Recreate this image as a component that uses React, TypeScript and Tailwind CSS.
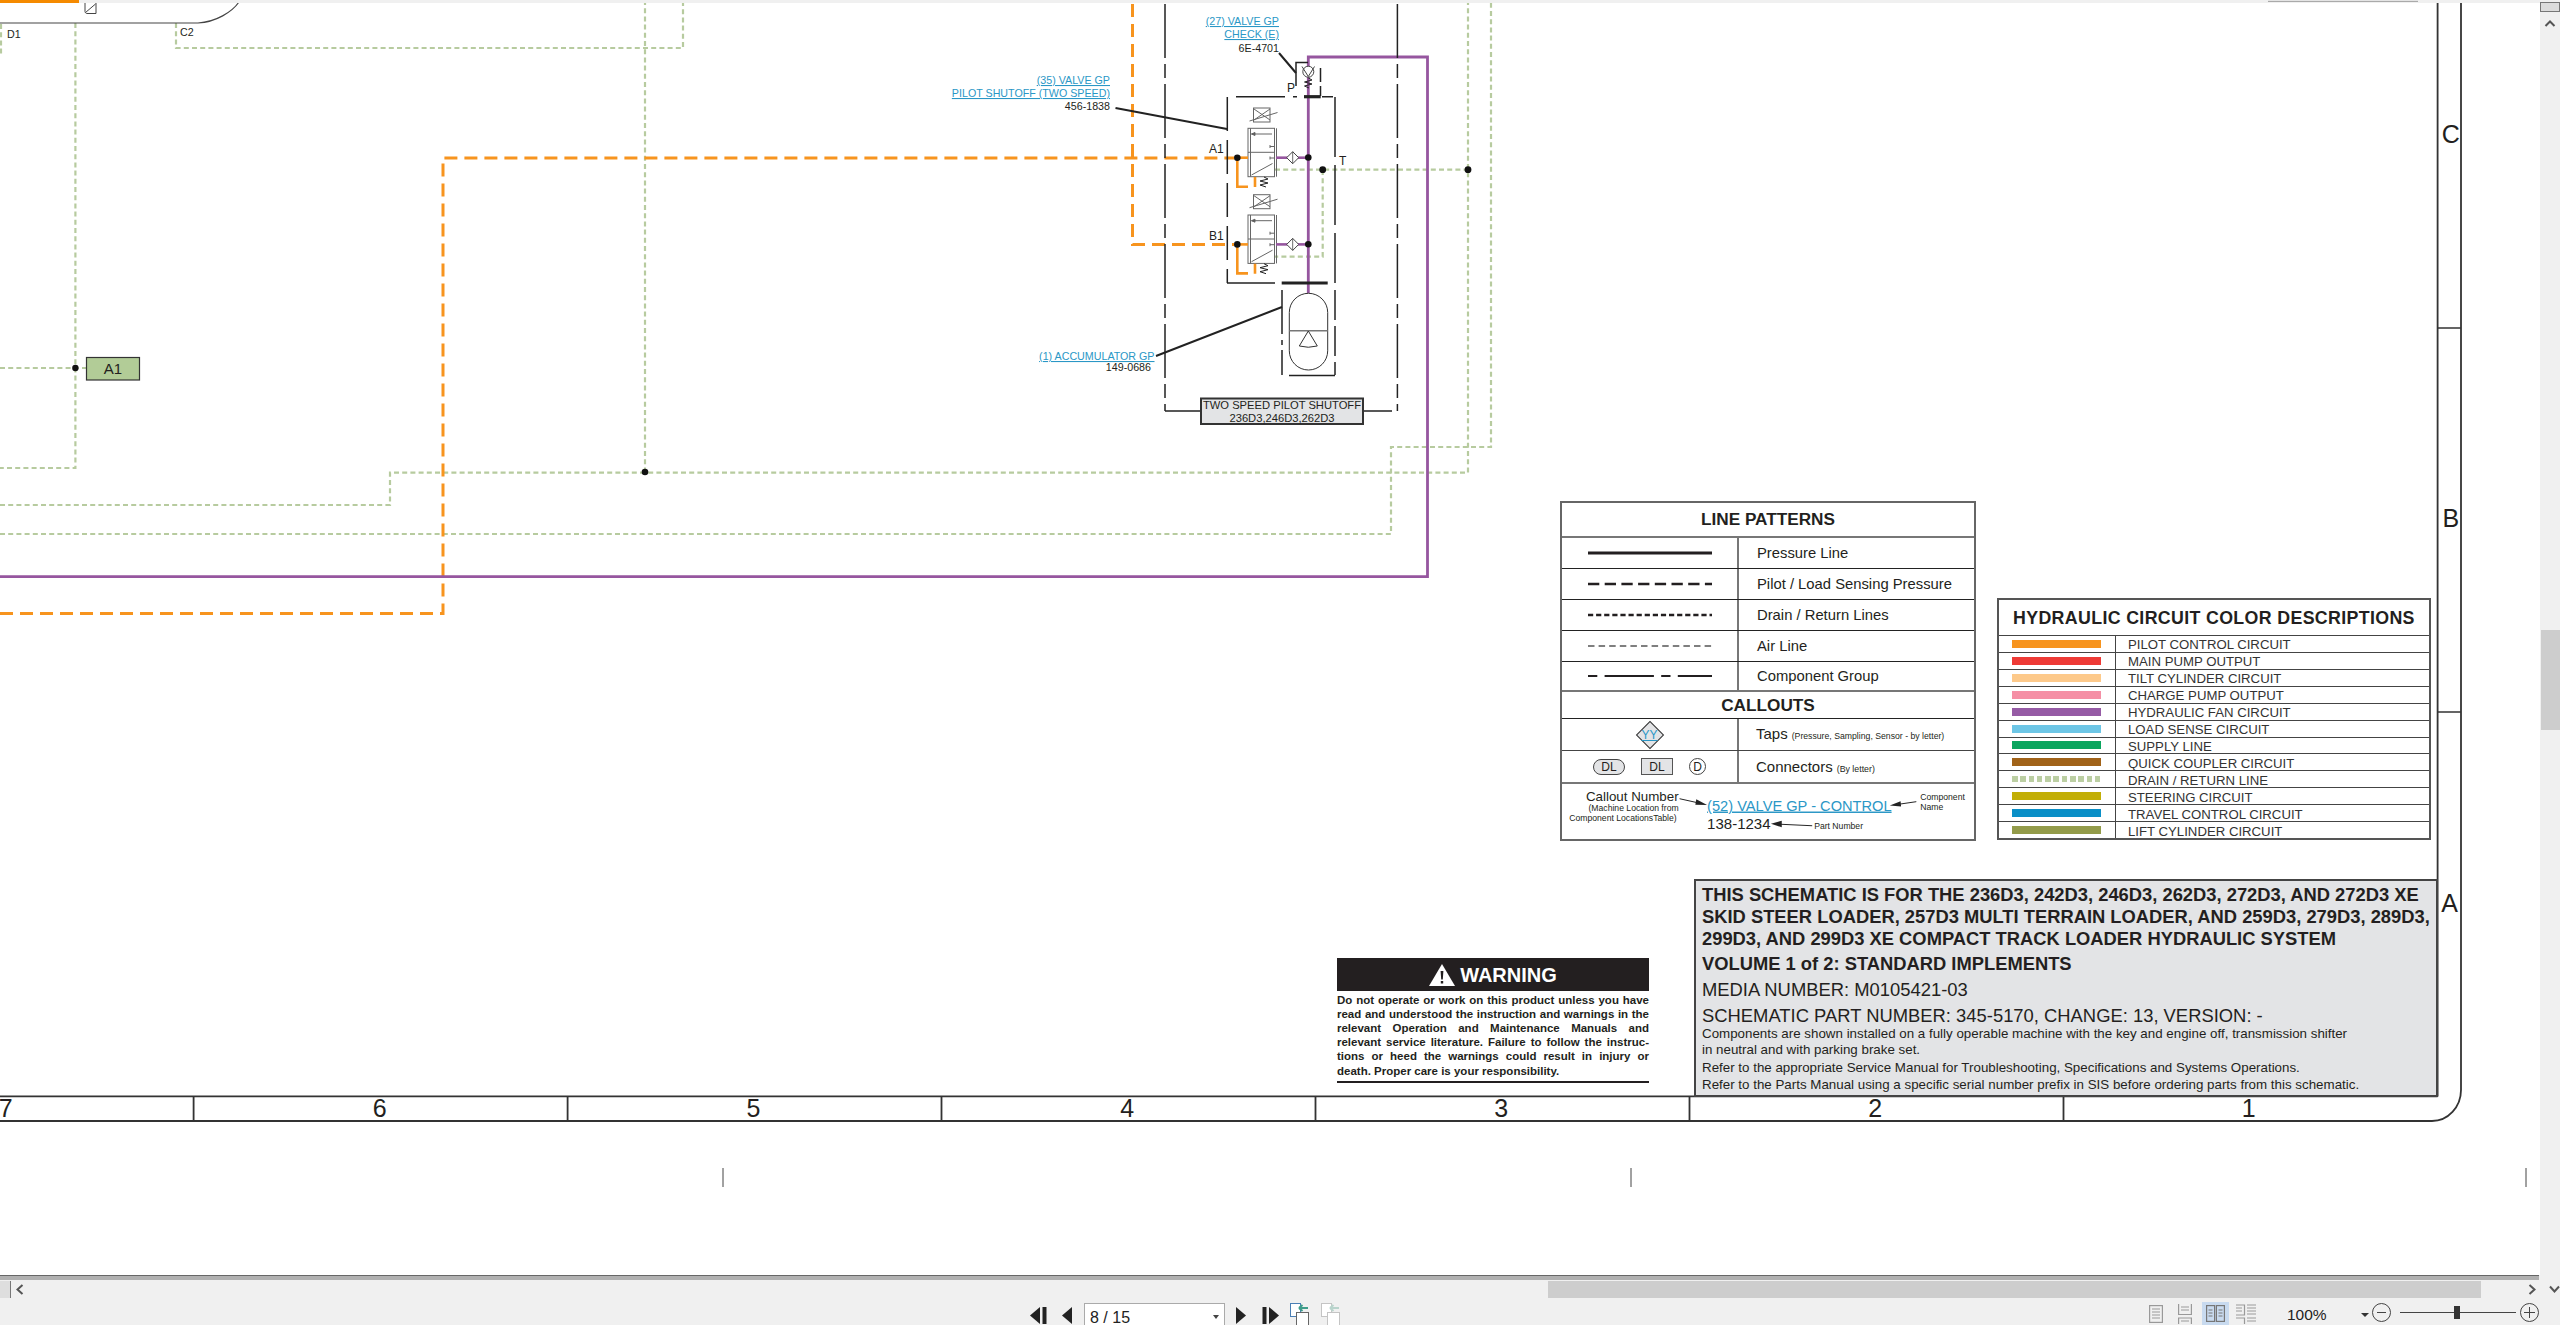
const GREEN = "#b7cb9f";
const ORANGE = "#f7941e";
const PURPLE = "#96569f";
const INK = "#231f20";
const LINK = "#2a97c6";

const lineSamples = [
  { label: "Pressure Line", width: 3, dash: "", color: INK },
  { label: "Pilot / Load Sensing Pressure", width: 2.6, dash: "11.3 5.4", color: INK },
  { label: "Drain / Return Lines", width: 2.6, dash: "5.2 2.9", color: INK },
  { label: "Air Line", width: 1.3, dash: "6.5 4.1", color: "#555" },
  { label: "Component Group", width: 2, dash: "9.3 7.3 49.3 7.3 9.3 7.3 34 0", color: INK },
];

const circuits = [
  { label: "PILOT CONTROL CIRCUIT", color: "bg-[#f7941e]" },
  { label: "MAIN PUMP OUTPUT", color: "bg-[#ee3a36]" },
  { label: "TILT CYLINDER CIRCUIT", color: "bg-[#fdc98a]" },
  { label: "CHARGE PUMP OUTPUT", color: "bg-[#f58fa5]" },
  { label: "HYDRAULIC FAN CIRCUIT", color: "bg-[#965ba5]" },
  { label: "LOAD SENSE CIRCUIT", color: "bg-[#6dc6e6]" },
  { label: "SUPPLY LINE", color: "bg-[#0ba55f]" },
  { label: "QUICK COUPLER CIRCUIT", color: "bg-[#a16319]" },
  { label: "DRAIN / RETURN LINE", color: "" },
  { label: "STEERING CIRCUIT", color: "bg-[#c2ae06]" },
  { label: "TRAVEL CONTROL CIRCUIT", color: "bg-[#0a8fc7]" },
  { label: "LIFT CYLINDER CIRCUIT", color: "bg-[#939b4a]" },
];

const warningLines = [
  "Do not operate or work on this product unless you have",
  "read and understood the instruction and warnings in the",
  "relevant Operation and Maintenance Manuals and",
  "relevant service literature. Failure to follow the instruc-",
  "tions or heed the warnings could result in injury or",
];

function Valve({ dy }: { dy: number }) {
  return (
    <g transform={`translate(0 ${dy})`} stroke="#666" fill="none" strokeWidth="1">
      <rect x="1253.5" y="108" width="16.5" height="14" />
      <path d="M1254 109L1270 120M1254 120L1270 109M1249.5 121L1277.5 112.5" />
      <rect x="1248" y="128.3" width="26.5" height="48.4" />
      <path d="M1250.5 128.3V176.7M1276.5 128.3V176.7M1248 152.3H1274.5M1251.5 134H1272M1251.5 175L1272.5 163.5" />
      <path d="M1255 132.5L1251.5 134L1255 135.5Z" fill="#555" />
      <path d="M1270 146.5H1274.5M1270 145V148M1270 158H1274.5M1270 156.5V159.5" />
      <path d="M1264 177L1268 179L1260 181L1268 183L1260 185L1266 187" stroke="#222" />
      <path d="M1237.3 158V186.7H1248M1255 177V187" stroke={ORANGE} strokeWidth="2.6" />
      <path d="M1237.3 157.7H1248" stroke={ORANGE} strokeWidth="2.6" />
      <path d="M1276 157.7H1308" stroke={PURPLE} strokeWidth="2.6" />
      <path d="M1292.7 151.7L1298.7 157.7L1292.7 163.7L1286.7 157.7Z" fill="#fff" stroke="#444" />
      <path d="M1292.7 151.7V163.7" stroke="#444" strokeWidth="0.8" />
      <circle cx="1237.3" cy="157.7" r="3.3" fill="#111" stroke="none" />
      <circle cx="1308.3" cy="157.5" r="3.3" fill="#111" stroke="none" />
    </g>
  );
}

function Diagram() {
  return (
    <svg className="absolute left-0 top-0" width="2540" height="1275" viewBox="0 0 2540 1275" fill={INK} fontSize="10.7">
      {/* return lines */}
      <g fill="none" stroke={GREEN} strokeWidth="2.2" strokeDasharray="5 3.2">
        <path d="M1 24V55" />
        <path d="M75.4 23V468H0" />
        <path d="M176 23V48H683V0" />
        <path d="M645 0V472" />
        <path d="M0 368H86" />
        <path d="M0 505H390V472.6H1468V0" />
        <path d="M0 534H1391V447H1491V0" />
        <path d="M1275 169.7H1468" />
        <path d="M1322.7 170V256.7H1275" />
      </g>
      {/* pilot lines */}
      <g fill="none" stroke={ORANGE} strokeWidth="3" strokeDasharray="13 7">
        <path d="M0 613.6H443V158H1234" />
        <path d="M1132.5 4V244.5H1234" />
      </g>
      {/* fan line */}
      <path d="M0 576.7H1427.5V57H1308.3V293" fill="none" stroke={PURPLE} strokeWidth="2.8" />

      <circle cx="75.4" cy="368" r="3.2" fill="#111" />
      <circle cx="645" cy="472" r="3.3" fill="#111" />
      <circle cx="1468" cy="169.7" r="3.4" fill="#111" />
      <circle cx="1322.7" cy="169.7" r="3.4" fill="#111" />

      <rect x="86.5" y="357.5" width="53" height="22.5" fill="#b2cc97" stroke="#333" strokeWidth="1.2" />
      <text x="113" y="374" textAnchor="middle" fontSize="15">A1</text>
      <text x="7" y="38">D1</text>
      <text x="180" y="36">C2</text>

      {/* top left block */}
      <path d="M0 23H198C216 22 232 12 239 2" fill="none" stroke="#444" strokeWidth="1.2" />
      <path d="M85 3V11.5C85 12.5 86 13.5 87 13.5H96V3M85.5 12.5L95.5 4" fill="none" stroke="#444" strokeWidth="1" />

      {/* two speed group */}
      <g fill="none" stroke="#222" strokeWidth="1.5">
        <path d="M1165 4V411M1397.4 4V411" strokeDasharray="54 6 14 6" />
        <path d="M1165 411H1200M1363 411H1392" />
        <path d="M1227.3 97V283" strokeDasharray="34 9" />
        <path d="M1335 97V283" strokeDasharray="60 8" />
        <path d="M1236 96.7H1285M1293 96.7H1297M1322 96.7H1333" />
        <path d="M1227 283H1275" />
        <path d="M1281.7 283H1327.7" strokeWidth="3.2" />
        <path d="M1304 96.7H1320.7" strokeWidth="3.2" />
        <path d="M1296 86V62.5H1308M1320.5 68V82M1320.5 86V96" />
        <path d="M1282 290V345M1282 350V375" strokeDasharray="44 6" />
        <path d="M1335 290V375" strokeDasharray="30 6" />
        <path d="M1289 375.5H1335" />
        <path d="M1279 53L1296 73M1115.5 108L1227 129M1156 356L1282 307" strokeWidth="2" />
      </g>

      <Valve dy={0} />
      <Valve dy={86.7} />

      {/* check valve */}
      <g fill="none" stroke="#444" strokeWidth="1">
        <circle cx="1308.3" cy="71.7" r="5.5" fill="#fff" />
        <path d="M1302 66.5L1308.3 76.5L1314.5 66.5" />
        <path d="M1308.3 78L1312 80L1304.5 82L1312 84L1304.5 86L1309 88" stroke="#222" />
      </g>

      {/* accumulator */}
      <g fill="none" stroke="#333" strokeWidth="1">
        <rect x="1289.3" y="293.3" width="38.4" height="76.7" rx="19.2" fill="#fff" />
        <path d="M1289.3 330.7H1327.7" stroke="#777" strokeWidth="1.4" />
        <path d="M1308.3 331L1299.3 346Q1308.3 348.5 1317.3 346Z" />
      </g>

      {/* callouts */}
      <g textAnchor="end">
        <text x="1279" y="25" fill={LINK} textDecoration="underline">(27) VALVE GP</text>
        <text x="1279" y="38" fill={LINK} textDecoration="underline">CHECK (E)</text>
        <text x="1279" y="52">6E-4701</text>
        <text x="1110" y="84" fill={LINK} textDecoration="underline">(35) VALVE GP</text>
        <text x="1110" y="97" fill={LINK} textDecoration="underline">PILOT SHUTOFF (TWO SPEED)</text>
        <text x="1110" y="110">456-1838</text>
        <text x="1154.5" y="360" fill={LINK} textDecoration="underline">(1) ACCUMULATOR GP</text>
        <text x="1151" y="371">149-0686</text>
      </g>
      <text x="1209" y="153" fontSize="12">A1</text>
      <text x="1209" y="240" fontSize="12">B1</text>
      <text x="1339" y="165" fontSize="12">T</text>
      <text x="1287" y="92" fontSize="12">P</text>

      <rect x="1201" y="398.5" width="162" height="25.5" fill="#e3e4e6" stroke="#333" strokeWidth="2" />
      <text x="1282" y="409" textAnchor="middle" fontSize="11.2">TWO SPEED PILOT SHUTOFF</text>
      <text x="1282" y="422" textAnchor="middle" fontSize="11.2">236D3,246D3,262D3</text>

      {/* sheet frame */}
      <g fill="none" stroke="#333" strokeWidth="1.8">
        <path d="M2437.6 3V1096.4M0 1096.4H2437.6" />
        <path d="M2461 3V1090C2461 1107 2448 1121 2432 1121H0" />
        <path d="M193.6 1096V1121M567.6 1096V1121M941.5 1096V1121M1315.5 1096V1121M1689.5 1096V1121M2063.5 1096V1121" />
        <path d="M2437.6 328H2461M2437.6 712H2461" strokeWidth="1.3" />
      </g>
      <g textAnchor="middle" fontSize="25">
        <text x="5.7" y="1117">7</text>
        <text x="379.6" y="1117">6</text>
        <text x="753.5" y="1117">5</text>
        <text x="1127.3" y="1117">4</text>
        <text x="1501.3" y="1117">3</text>
        <text x="1875.3" y="1117">2</text>
        <text x="2248.8" y="1117">1</text>
        <text x="2450.8" y="143">C</text>
        <text x="2450.8" y="527">B</text>
        <text x="2449.5" y="912">A</text>
      </g>
      <path d="M723 1168V1187M1631 1168V1187M2526 1168V1187" stroke="#444" strokeWidth="1" />
    </svg>
  );
}

function LinePatterns() {
  return (
    <div className="absolute left-[1560px] top-[501px] flex h-[340px] w-[416px] flex-col border-2 border-[#666] bg-white text-[#231f20]">
      <div className="flex h-[35px] items-center justify-center border-b-2 border-[#777] pt-[1px] text-[17.2px] font-bold">LINE PATTERNS</div>
      {lineSamples.map((row, i) => (
        <div key={row.label} className={i === 4 ? "flex h-[30px] border-b-2 border-[#777]" : "flex h-[31px] border-b border-[#222]"}>
          <div className="flex w-[177px] items-center justify-center border-r-2 border-[#777]">
            <svg width="124" height="4" viewBox="0 0 124 4">
              <line x1="0" y1="2" x2="124" y2="2" stroke={row.color} strokeWidth={row.width} strokeDasharray={row.dash} />
            </svg>
          </div>
          <div className="flex items-center pl-[18px] text-[14.8px]">{row.label}</div>
        </div>
      ))}
      <div className="flex h-[27px] items-center justify-center border-b border-[#222] pt-[1px] text-[17.2px] font-bold">CALLOUTS</div>
      <div className="flex h-[32px] border-b border-[#444]">
        <div className="flex w-[177px] items-center justify-center border-r-2 border-[#777]">
          <div className="relative flex h-[29px] w-[29px] items-center justify-center">
            <div className="absolute h-[20px] w-[20px] rotate-45 border-[1.5px] border-[#333] bg-[#e3e4e6]" />
            <span className="relative text-[12px] text-[#2a97c6] underline">YY</span>
          </div>
        </div>
        <div className="flex items-baseline pl-[17px] pt-[4px] text-[15px]">
          Taps
          <span className="ml-[4px] text-[8.7px]">(Pressure, Sampling, Sensor - by letter)</span>
        </div>
      </div>
      <div className="flex h-[33px] border-b-2 border-[#777]">
        <div className="flex w-[177px] items-center border-r-2 border-[#777] pl-[31px] text-[12px]">
          <div className="flex h-[16px] w-[32px] items-center justify-center rounded-full border border-[#444] bg-[#e3e4e6]">DL</div>
          <div className="ml-[16px] flex h-[17px] w-[32px] items-center justify-center border border-[#555] bg-[#e3e4e6]">DL</div>
          <div className="ml-[16px] flex h-[17px] w-[17px] items-center justify-center rounded-full border border-[#444]">D</div>
        </div>
        <div className="flex items-baseline pl-[17px] pt-[5px] text-[15px]">
          Connectors
          <span className="ml-[4px] text-[8.8px]">(By letter)</span>
        </div>
      </div>
      <svg className="flex-1" width="412" height="56" viewBox="1562 784 412 56" fill={INK}>
        <text x="1677" y="801" textAnchor="end" fontSize="13.6">Callout Number</text>
        <text x="1677" y="811.5" textAnchor="end" fontSize="8.8">(Machine Location from</text>
        <text x="1675" y="821.5" textAnchor="end" fontSize="8.8">Component LocationsTable)</text>
        <text x="1706" y="811" fontSize="14.9" fill={LINK} textDecoration="underline">(52) VALVE GP - CONTROL</text>
        <text x="1706" y="829.5" fontSize="15.3">138-1234</text>
        <text x="1815" y="829.5" fontSize="8.8">Part Number</text>
        <text x="1923" y="800" fontSize="8.8">Component</text>
        <text x="1923" y="810" fontSize="8.8">Name</text>
        <path d="M1678 799L1696 803M1919 802L1902 804.5M1813 826.5L1781 825" stroke="#222" strokeWidth="1" fill="none" />
        <path d="M1695 799.5L1706 805.5L1694 805ZM1892 806L1903 801.5L1903.5 807ZM1771 824.5L1782 821.5L1782 828Z" fill="#222" />
      </svg>
    </div>
  );
}

function CircuitColors() {
  return (
    <div className="absolute left-[1997px] top-[598px] flex h-[242px] w-[434px] flex-col border-2 border-[#555] bg-white text-[#231f20]">
      <div className="flex h-[36px] items-center border-b border-[#444] pl-[14px] pt-[1px] text-[17.8px] font-bold tracking-[0.35px]">HYDRAULIC CIRCUIT COLOR DESCRIPTIONS</div>
      {circuits.map((row, i) => (
        <div key={row.label} className={i === 11 ? "flex flex-1" : "flex flex-1 border-b border-[#444]"}>
          <div className="flex w-[117px] items-center border-r border-[#444] pl-[13px]">
            {row.color ? (
              <div className={`h-[8px] w-[89px] ${row.color}`} />
            ) : (
              <div className="flex h-[6px] w-[89px] gap-[2.8px]">
                {Array.from({ length: 11 }, (_, k) => (
                  <span key={k} className="h-[6px] w-[5.5px] bg-[#bccfa3]" />
                ))}
              </div>
            )}
          </div>
          <div className="flex items-center pl-[12px] pt-[2px] text-[13.2px] leading-none text-[#333]">{row.label}</div>
        </div>
      ))}
    </div>
  );
}

function Warning() {
  return (
    <div className="absolute left-[1337px] top-[958px] w-[312px] text-[#231f20]">
      <div className="flex h-[33px] items-center justify-center gap-[5px] bg-[#231f20] text-[20px] font-bold text-white">
        <svg width="26" height="22" viewBox="0 0 26 22">
          <path d="M13 0L26 22H0Z" fill="#fff" />
          <path d="M11.6 7H14.4L13.8 15.5H12.2ZM11.8 17H14.2V19.6H11.8Z" fill="#231f20" />
        </svg>
        WARNING
      </div>
      <div className="mt-[1.5px] border-b-2 border-[#231f20] pb-[3px] text-[11.5px] font-bold leading-[14.2px]">
        {warningLines.map((line) => (
          <div key={line} className="text-justify [text-align-last:justify]">{line}</div>
        ))}
        <div>death. Proper care is your responsibility.</div>
      </div>
    </div>
  );
}

function SchematicNote() {
  return (
    <div className="absolute left-[1694px] top-[879px] h-[218px] w-[744px] overflow-hidden border-2 border-[#444] bg-[#e3e4e6] pl-[6px] pt-[3px] text-[#231f20]">
      <div className="text-[18.35px] font-bold leading-[22px] whitespace-nowrap">
        <div>THIS SCHEMATIC IS FOR THE 236D3, 242D3, 246D3, 262D3, 272D3, AND 272D3 XE</div>
        <div>SKID STEER LOADER, 257D3 MULTI TERRAIN LOADER, AND 259D3, 279D3, 289D3,</div>
        <div>299D3, AND 299D3 XE COMPACT TRACK LOADER HYDRAULIC SYSTEM</div>
        <div className="mt-[1px] leading-[26px]">VOLUME 1 of 2: STANDARD IMPLEMENTS</div>
      </div>
      <div className="text-[18.4px] leading-[26px] whitespace-nowrap">
        <div>MEDIA NUMBER: M0105421-03</div>
        <div>SCHEMATIC PART NUMBER: 345-5170, CHANGE: 13, VERSION: -</div>
      </div>
      <div className="-mt-[3px] text-[13.35px] leading-[16px] whitespace-nowrap">
        <div>Components are shown installed on a fully operable machine with the key and engine off, transmission shifter</div>
        <div>in neutral and with parking brake set.</div>
        <div className="mt-[1px] leading-[17px]">Refer to the appropriate Service Manual for Troubleshooting, Specifications and Systems Operations.</div>
        <div className="leading-[17px]">Refer to the Parts Manual using a specific serial number prefix in SIS before ordering parts from this schematic.</div>
      </div>
    </div>
  );
}

function VScroll() {
  return (
    <div className="flex w-[20px] flex-col items-center bg-[#f0f0f0]">
      <div className="mt-[2px] h-[10px] w-full border border-[#777] bg-[#dcdcdc]" />
      <svg className="mt-[8px]" width="12" height="7" viewBox="0 0 12 7">
        <path d="M1.5 6L6 1.5L10.5 6" fill="none" stroke="#555" strokeWidth="2" />
      </svg>
      <div className="mt-[603px] h-[100px] w-[19px] bg-[#cdcdcd]" />
    </div>
  );
}

function PageFirst() {
  return (
    <svg width="17" height="17" viewBox="0 0 17 17">
      <path d="M0 8.5L10 0V17Z" fill="#222" />
      <rect x="12.5" y="0" width="4" height="17" fill="#222" />
    </svg>
  );
}

function DocIcon({ faded }: { faded?: boolean }) {
  const stroke = faded ? "#c4c4c4" : "#666";
  const accent = faded ? "#b9d4cc" : "#3f9d8a";
  return (
    <svg width="20" height="22" viewBox="0 0 20 22">
      <rect x="0.5" y="0.5" width="10" height="13" fill="#fff" stroke={faded ? "#c4c4c4" : "#4a7fb5"} />
      <rect x="6.5" y="9.5" width="12" height="14" fill="#fff" stroke={stroke} />
      <path d="M9 5H18M9 5L12.5 2M9 5L12.5 8" fill="none" stroke={accent} strokeWidth="2" />
    </svg>
  );
}

function ViewIcon({ kind }: { kind: "single" | "scroll" | "two" | "twoScroll" }) {
  const s = "#999";
  if (kind === "two") {
    return (
      <svg width="19" height="17" viewBox="0 0 19 17" fill="none" stroke="#777" strokeWidth="1.2">
        <rect x="0.6" y="0.6" width="8" height="15.8" />
        <rect x="10.4" y="0.6" width="8" height="15.8" />
        <path d="M2.5 5H6.5M2.5 8H6.5M2.5 11H6.5M12.5 5H16.5M12.5 8H16.5M12.5 11H16.5" />
      </svg>
    );
  }
  if (kind === "twoScroll") {
    return (
      <svg width="20" height="20" viewBox="0 0 20 20" fill="none" stroke={s} strokeWidth="1.2">
        <path d="M0 1H8.5V11H0M0 4H6M0 7H6M11 1H20M11 4H20M11 7H20M11 10H20M0 14H8.5V20M11 14H20M11 17H20" />
      </svg>
    );
  }
  if (kind === "scroll") {
    return (
      <svg width="14" height="20" viewBox="0 0 14 20" fill="none" stroke={s} strokeWidth="1.2">
        <path d="M0.6 0V10.5H13.4V0M3 3H11M3 6H11M0.6 20V14H13.4V20M3 17H11" />
      </svg>
    );
  }
  return (
    <svg width="14" height="18" viewBox="0 0 14 18" fill="none" stroke={s} strokeWidth="1.2">
      <rect x="0.6" y="0.6" width="12.8" height="16.8" />
      <path d="M3 4H11M3 7H11M3 10H11M3 13H11" />
    </svg>
  );
}

function BottomBars() {
  return (
    <div className="flex h-[50px] flex-col bg-[#f0f0f0]">
      <div className="mr-[21px] h-[5px] border-t border-[#666] bg-[#b0b0b0]" />
      <div className="relative flex h-[18px] items-center">
        <div className="h-[17px] w-[11px] border-r border-[#777] bg-[#dedede]" />
        <svg className="ml-[5px]" width="8" height="11" viewBox="0 0 8 11">
          <path d="M6.5 1L1.5 5.5L6.5 10" fill="none" stroke="#555" strokeWidth="2" />
        </svg>
        <div className="ml-[1524px] h-[17px] w-[933px] bg-[#cdcdcd]" />
        <svg className="ml-[47px]" width="8" height="11" viewBox="0 0 8 11">
          <path d="M1.5 1L6.5 5.5L1.5 10" fill="none" stroke="#555" strokeWidth="2" />
        </svg>
        <svg className="ml-[13px]" width="11" height="8" viewBox="0 0 11 8">
          <path d="M1 1.5L5.5 6.5L10 1.5" fill="none" stroke="#555" strokeWidth="2" />
        </svg>
      </div>
      <div className="flex h-[27px] items-start overflow-hidden pl-[1030px] pt-[5px]">
        <div className="mt-[4px]"><PageFirst /></div>
        <svg className="ml-[15px] mt-[4px]" width="10" height="17" viewBox="0 0 10 17">
          <path d="M0 8.5L10 0V17Z" fill="#222" />
        </svg>
        <div className="ml-[12px] flex h-[26px] w-[141px] items-start border border-[#aaa] bg-white pl-[5px] pr-[5px] pt-[2px] text-[16px] text-[#222]">
          <span>8 / 15</span>
          <span className="ml-auto mt-[9px] h-0 w-0 border-x-[3.5px] border-t-[4px] border-x-transparent border-t-[#444]" />
        </div>
        <svg className="ml-[11px] mt-[4px]" width="10" height="17" viewBox="0 0 10 17">
          <path d="M10 8.5L0 0V17Z" fill="#222" />
        </svg>
        <div className="ml-[16px] mt-[4px] rotate-180"><PageFirst /></div>
        <div className="ml-[11px]"><DocIcon /></div>
        <div className="ml-[11px]"><DocIcon faded /></div>
        <div className="ml-[808px] mt-[2px]"><ViewIcon kind="single" /></div>
        <div className="ml-[15px] mt-[1px]"><ViewIcon kind="scroll" /></div>
        <div className="ml-[10px] -mt-[1px] flex h-[24px] w-[27px] items-start justify-center bg-[#c8daef] pt-[3px]">
          <ViewIcon kind="two" />
        </div>
        <div className="ml-[7px] mt-[1px]"><ViewIcon kind="twoScroll" /></div>
        <span className="ml-[31px] text-[15.5px] leading-[24px] text-[#222]">100%</span>
        <span className="ml-[34px] mt-[10px] h-0 w-0 border-x-[4px] border-t-[4px] border-x-transparent border-t-[#333]" />
        <div className="ml-[3px] flex h-[19px] w-[19px] items-center justify-center rounded-full border border-[#444]">
          <span className="h-px w-[9px] bg-[#444]" />
        </div>
        <div className="relative ml-[9px] mt-[9px] h-px w-[116px] bg-[#444]">
          <span className="absolute left-[54px] top-[-6px] h-[13px] w-[6px] bg-[#333]" />
        </div>
        <div className="relative ml-[4px] flex h-[19px] w-[19px] items-center justify-center rounded-full border border-[#444]">
          <span className="h-px w-[11px] bg-[#444]" />
          <span className="absolute h-[11px] w-px bg-[#444]" />
        </div>
      </div>
    </div>
  );
}

export default function App() {
  return (
    <div className="flex h-[1325px] w-[2560px] flex-col overflow-hidden bg-white font-['Liberation_Sans',Arial,sans-serif]">
      <div className="flex h-[1275px]">
        <div className="relative flex-1 overflow-hidden bg-white">
          <Diagram />
          <LinePatterns />
          <CircuitColors />
          <Warning />
          <SchematicNote />
          <div className="absolute left-0 top-0 flex h-[3px] w-full bg-[#f0f0f0]">
            <div className="h-full w-[79px] bg-[#f58a00]" />
            <div className="ml-[2189px] h-[2px] w-[150px] border-b border-[#aaa] bg-[#e4e4e4]" />
          </div>
        </div>
        <VScroll />
      </div>
      <BottomBars />
    </div>
  );
}
